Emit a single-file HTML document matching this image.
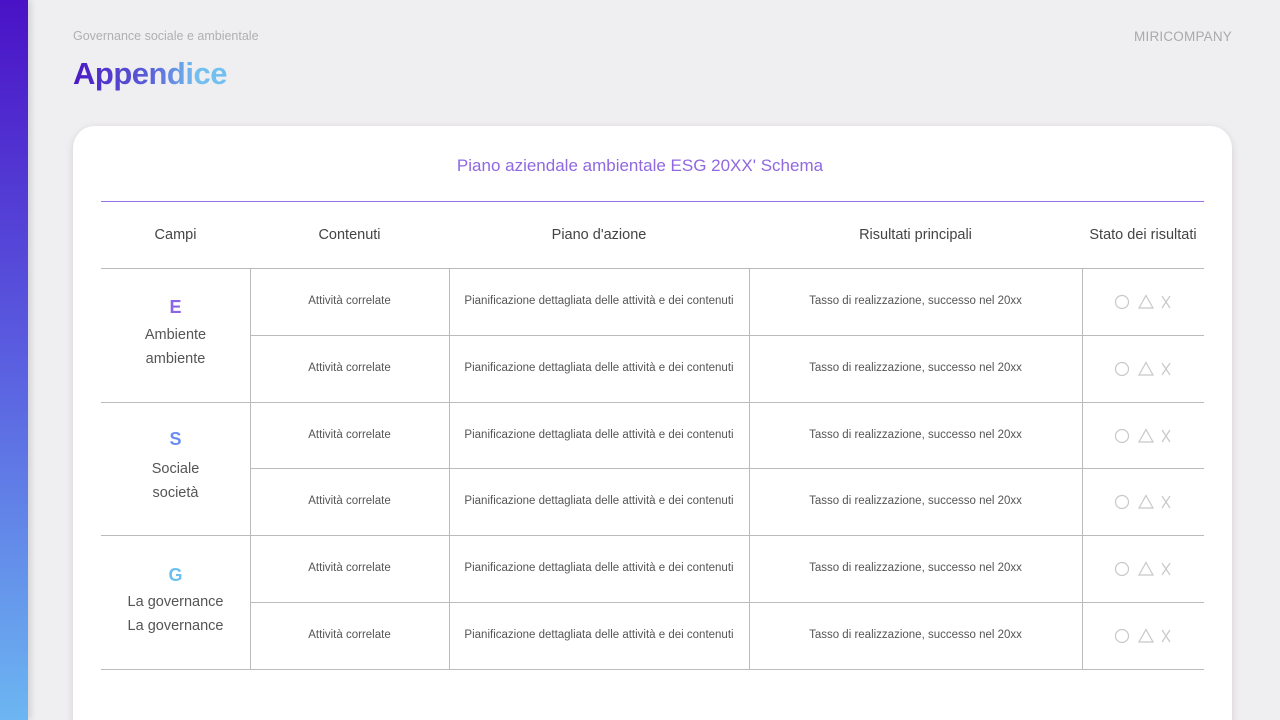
<!DOCTYPE html>
<html><head><meta charset="utf-8"><style>
*{margin:0;padding:0;box-sizing:border-box}
html,body{width:1280px;height:720px;overflow:hidden}
body{background:#efeef0;font-family:"Liberation Sans",sans-serif;position:relative}
.bar{position:absolute;left:0;top:0;width:28px;height:720px;background:linear-gradient(#4a12c6,#5a5ee0 50%,#6cb6f2);box-shadow:3px 0 6px rgba(0,0,0,.12)}
.sub{position:absolute;left:73px;top:29px;font-size:12.5px;color:#b0b0b0}
.brand{position:absolute;right:48px;top:29px;font-size:13.5px;color:#aaa;letter-spacing:.2px}
h1{position:absolute;left:73px;top:56px;font-size:31px;font-weight:bold;background:linear-gradient(90deg,#4a18c4,#5a60d8 50%,#72c0f0 80%);-webkit-background-clip:text;color:transparent;letter-spacing:-.5px}
.card{position:absolute;left:73px;top:126px;width:1159px;height:620px;background:#fff;border-radius:22px;box-shadow:0 2px 8px rgba(0,0,0,.12)}
.title{position:absolute;left:0;width:1280px;top:156px;text-align:center;font-size:17px;color:#9068e0}
.hl{position:absolute;left:101px;width:1103px;height:1px;background:#bbb}
.pl{position:absolute;left:101px;width:1103px;height:1px;top:201px;background:#9b6fe6}
.vl{position:absolute;width:1px;background:#bbb}
.t{position:absolute;text-align:center;color:#555;white-space:nowrap}
.h{font-size:14.5px;color:#444;top:227px}
.c{font-size:11.5px}
</style></head><body>
<div class="bar"></div>
<div class="sub">Governance sociale e ambientale</div>
<div class="brand">MIRICOMPANY</div>
<h1>Appendice</h1>
<div class="card"></div>
<div class="title">Piano aziendale ambientale ESG 20XX' Schema</div>
<div class="pl"></div>
<div class="hl" style="top:268px"></div>
<div class="hl" style="top:335px;left:250px;width:954px"></div>
<div class="hl" style="top:402px"></div>
<div class="hl" style="top:468px;left:250px;width:954px"></div>
<div class="hl" style="top:535px"></div>
<div class="hl" style="top:602px;left:250px;width:954px"></div>
<div class="hl" style="top:669px"></div>
<div class="vl" style="left:250px;top:268px;height:401px"></div>
<div class="vl" style="left:449px;top:268px;height:401px"></div>
<div class="vl" style="left:749px;top:268px;height:401px"></div>
<div class="vl" style="left:1082px;top:268px;height:401px"></div>
<div class="t h" style="left:101px;width:149px">Campi</div>
<div class="t h" style="left:250px;width:199px">Contenuti</div>
<div class="t h" style="left:449px;width:300px">Piano d'azione</div>
<div class="t h" style="left:749px;width:333px">Risultati principali</div>
<div class="t h" style="left:1082px;width:122px">Stato dei risultati</div>

<div class="t" style="left:101px;width:149px;top:297px;font-size:18px;font-weight:bold;color:#8a66e6">E</div>
<div class="t" style="left:101px;width:149px;top:323px;font-size:14.5px;line-height:24px">Ambiente<br>ambiente</div>
<div class="t" style="left:101px;width:149px;top:429px;font-size:18px;font-weight:bold;color:#6a8ef0">S</div>
<div class="t" style="left:101px;width:149px;top:457px;font-size:14.5px;line-height:24px">Sociale<br>società</div>
<div class="t" style="left:101px;width:149px;top:565px;font-size:18px;font-weight:bold;color:#6cc0f0">G</div>
<div class="t" style="left:101px;width:149px;top:590px;font-size:14.5px;line-height:24px">La governance<br>La governance</div>

<div id="rows"></div>
<script>
var tops=[268,335,402,468,535,602],h='';
tops.forEach(function(t){var y=t+27;
h+='<div class="t c" style="left:250px;width:199px;top:'+y+'px">Attività correlate</div>';
h+='<div class="t c" style="left:449px;width:300px;top:'+y+'px">Pianificazione dettagliata delle attività e dei contenuti</div>';
h+='<div class="t c" style="left:749px;width:333px;top:'+y+'px">Tasso di realizzazione, successo nel 20xx</div>';
var cy=t+34;
h+='<svg style="position:absolute;left:1112px;top:'+(cy-8)+'px" width="60" height="16" fill="none" stroke="#c8c8c8" stroke-width="1.2"><circle cx="10" cy="8" r="6.5"/><path d="M34 1.5 L41 14 L27 14 Z"/><path d="M50 2 L58 14 M58 2 L50 14"/></svg>';});
document.getElementById('rows').innerHTML=h;
</script>
</body></html>
